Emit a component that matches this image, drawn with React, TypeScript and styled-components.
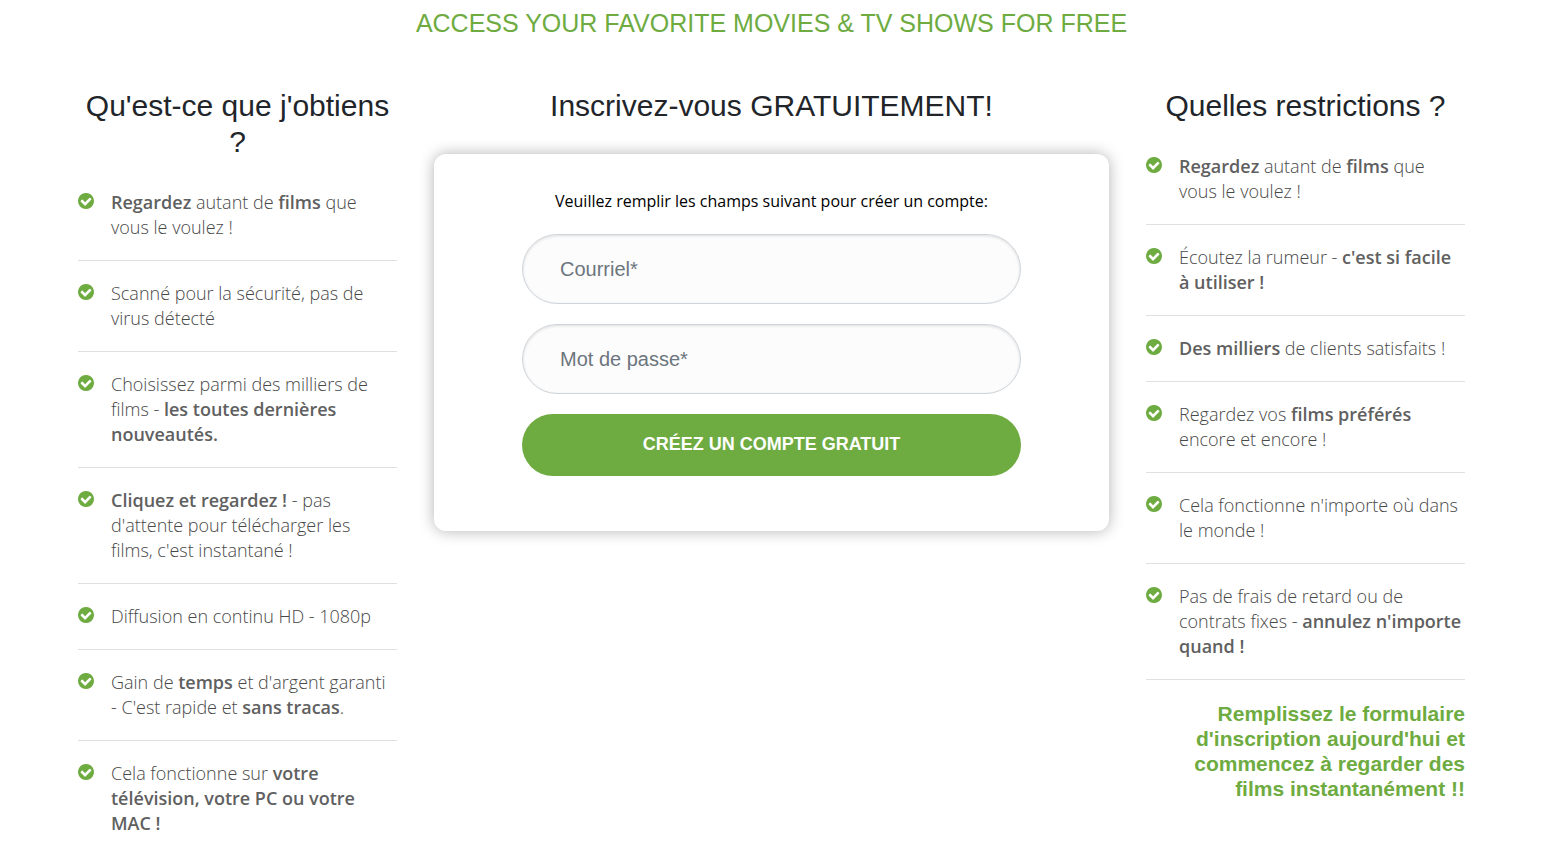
import React from 'react';
import styled, { createGlobalStyle } from 'styled-components';

const GlobalStyle = createGlobalStyle`
  * { box-sizing: border-box; }
  body {
    margin: 0;
    background: #fff;
    color: #212529;
    font-family: "Open Sans", sans-serif;
  }
`;

const Page = styled.main`
  padding: 5px 88px 0 78px;
`;

const Banner = styled.h1`
  margin: 0 0 47px;
  color: #6eab41;
  font: 400 25px/36px "Liberation Sans", Arial, sans-serif;
  text-align: center;
  text-transform: uppercase;
`;

const Columns = styled.div`
  display: grid;
  grid-template-columns: 319fr 675fr 319fr;
  column-gap: 37px;
  align-items: start;
`;

const Column = styled.section`
  min-width: 0;
`;

const Heading = styled.h2`
  margin: 0 0 10px;
  color: #212529;
  font: 400 30px/36px "Liberation Sans", Arial, sans-serif;
  text-align: center;
`;

const List = styled.ul`
  margin: 0;
  padding: 0;
  list-style: none;
`;

const Item = styled.li<{ $last?: boolean }>`
  display: flex;
  gap: 17px;
  padding: 20px 2px 20px 0;
  border-bottom: ${(p) => (p.$last ? '0' : '1px solid #e0e0e0')};
  color: #484848;
  font-size: 18px;
  font-weight: 300;
  line-height: 25px;

  b {
    color: #606060;
    font-weight: 600;
  }
`;

const Tick = styled.svg`
  flex: none;
  width: 16px;
  height: 16px;
  margin-top: 3px;
`;

const Card = styled.form`
  display: flex;
  flex-direction: column;
  gap: 20px;
  margin-top: 30px;
  padding: 34px 88px 55px;
  border-radius: 12px;
  box-shadow: 0 0 15px rgba(0, 0, 0, 0.3);
`;

const Intro = styled.p`
  margin: 0;
  color: #000;
  font-size: 16px;
  line-height: 26px;
  text-align: center;
`;

const Field = styled.input`
  width: 100%;
  height: 70px;
  padding: 0 37px;
  border: 1px solid #ced4da;
  border-radius: 35px;
  background: #fcfcfc;
  box-shadow: inset 0 1px 3px #ddd;
  color: #495057;
  font: 400 20px/24px "Liberation Sans", Arial, sans-serif;
  &::placeholder { color: #6c757d; opacity: 1; }
`;

const Submit = styled.button`
  height: 62px;
  padding: 0 0 2px;
  border: 0;
  border-radius: 31px;
  background: #6eab41;
  color: #fff;
  font: 700 18px/24px "Liberation Sans", Arial, sans-serif;
  text-transform: uppercase;
`;

const Closing = styled.p`
  margin: 21px 0 0;
  color: #6eab41;
  font: 700 21px/25px "Liberation Sans", Arial, sans-serif;
  text-align: right;
`;

const benefits: React.ReactNode[] = [
  <><b>Regardez</b> autant de <b>films</b> que vous le voulez !</>,
  <>Scanné pour la sécurité, pas de virus détecté</>,
  <>Choisissez parmi des milliers de films - <b>les toutes dernières nouveautés.</b></>,
  <><b>Cliquez et regardez !</b> - pas d'attente pour télécharger les films, c'est instantané !</>,
  <>Diffusion en continu HD - 1080p</>,
  <>Gain de <b>temps</b> et d'argent garanti - C'est rapide et <b>sans tracas</b>.</>,
  <>Cela fonctionne sur <b>votre télévision, votre PC ou votre MAC !</b></>,
];

const restrictions: React.ReactNode[] = [
  <><b>Regardez</b> autant de <b>films</b> que vous le voulez !</>,
  <>Écoutez la rumeur - <b>c'est si facile à utiliser !</b></>,
  <><b>Des milliers</b> de clients satisfaits !</>,
  <>Regardez vos <b>films préférés</b> encore et encore !</>,
  <>Cela fonctionne n'importe où dans le monde !</>,
  <>Pas de frais de retard ou de contrats fixes - <b>annulez n'importe quand !</b></>,
];

function CheckList({ items, openEnd }: { items: React.ReactNode[]; openEnd?: boolean }) {
  return (
    <List>
      {items.map((text, i) => (
        <Item key={i} $last={openEnd && i === items.length - 1}>
          <Tick viewBox="0 0 1536 1536" aria-hidden="true">
            <path
              fill="#6eab41"
              d="M1284 606q0-28-18-46l-91-90q-19-19-45-19t-45 19L677 877 451 651q-19-19-45-19t-45 19l-91 90q-18 18-18 46 0 27 18 45l362 362q19 19 45 19 27 0 46-19l543-543q18-18 18-45zm252 162q0 209-103 385.500T1153.500 1433 768 1536t-385.500-103T103 1153.500 0 768t103-385.500T382.500 103 768 0t385.500 103T1433 382.500 1536 768z"
            />
          </Tick>
          <span>{text}</span>
        </Item>
      ))}
    </List>
  );
}

export default function App() {
  return (
    <>
      <GlobalStyle />
      <Page>
        <Banner>Access your favorite movies &amp; TV shows for free</Banner>
        <Columns>
          <Column>
            <Heading>Qu'est-ce que j'obtiens ?</Heading>
            <CheckList items={benefits} openEnd />
          </Column>
          <Column>
            <Heading>Inscrivez-vous GRATUITEMENT!</Heading>
            <Card onSubmit={(e) => e.preventDefault()}>
              <Intro>Veuillez remplir les champs suivant pour créer un compte:</Intro>
              <Field type="email" placeholder="Courriel*" aria-label="Courriel" />
              <Field type="password" placeholder="Mot de passe*" aria-label="Mot de passe" />
              <Submit type="submit">Créez un compte gratuit</Submit>
            </Card>
          </Column>
          <Column>
            <Heading>Quelles restrictions ?</Heading>
            <CheckList items={restrictions} />
            <Closing>
              Remplissez le formulaire d'inscription aujourd'hui et commencez à regarder des films instantanément !!
            </Closing>
          </Column>
        </Columns>
      </Page>
    </>
  );
}
